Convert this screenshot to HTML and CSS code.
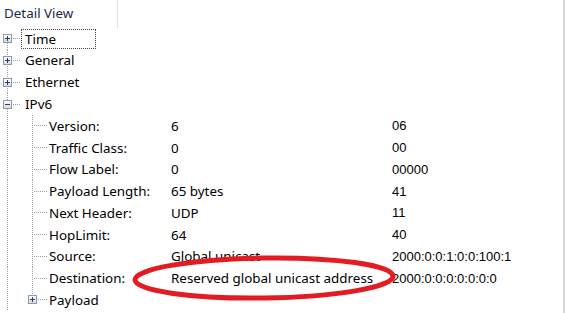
FILE: index.html
```html
<!DOCTYPE html>
<html lang="en">

<head>
    <meta charset="UTF-8">
    <title>Detail View</title>
    <link rel="stylesheet" href="styles.css">
</head>

<body>

    <div class="pane">
        <div class="head">
            <div class="title">Detail View</div>
            <div class="split"></div>
        </div>

        <div class="tree">
            <div class="row">
                <span class="g top first"><i class="box plus"></i></span>
                <span class="name focus">Time</span>
            </div>
            <div class="row">
                <span class="g top"><i class="box plus"></i></span>
                <span class="name">General</span>
            </div>
            <div class="row">
                <span class="g top"><i class="box plus"></i></span>
                <span class="name">Ethernet</span>
            </div>
            <div class="row">
                <span class="g top"><i class="box minus"></i></span>
                <span class="name">IPv6</span>
            </div>

            <div class="row">
                <span class="g line"></span><span class="g leaf"></span>
                <span class="key">Version:</span><span class="val">6</span><span class="hex">06</span>
            </div>
            <div class="row">
                <span class="g line"></span><span class="g leaf"></span>
                <span class="key">Traffic Class:</span><span class="val">0</span><span class="hex">00</span>
            </div>
            <div class="row">
                <span class="g line"></span><span class="g leaf"></span>
                <span class="key">Flow Label:</span><span class="val">0</span><span class="hex">00000</span>
            </div>
            <div class="row">
                <span class="g line"></span><span class="g leaf"></span>
                <span class="key">Payload Length:</span><span class="val">65 bytes</span><span class="hex">41</span>
            </div>
            <div class="row">
                <span class="g line"></span><span class="g leaf"></span>
                <span class="key">Next Header:</span><span class="val">UDP</span><span class="hex">11</span>
            </div>
            <div class="row">
                <span class="g line"></span><span class="g leaf"></span>
                <span class="key">HopLimit:</span><span class="val">64</span><span class="hex">40</span>
            </div>
            <div class="row">
                <span class="g line"></span><span class="g leaf"></span>
                <span class="key">Source:</span><span class="val">Global unicast</span><span class="hex">2000:0:0:1:0:0:100:1</span>
            </div>
            <div class="row">
                <span class="g line"></span><span class="g leaf"></span>
                <span class="key">Destination:</span><span class="val">Reserved global unicast address</span><span class="hex">2000:0:0:0:0:0:0:0</span>
            </div>
            <div class="row">
                <span class="g line"></span><span class="g last"><i class="box plus"></i></span>
                <span class="key">Payload</span>
            </div>
        </div>
    </div>

    <!-- red marker drawn over the destination row -->
    <svg class="mark" width="567" height="313" viewBox="0 0 567 313">
        <ellipse cx="264" cy="278" rx="129" ry="20" transform="rotate(-0.8 264 278)"
            fill="none" stroke="#e31b23" stroke-width="5" />
    </svg>

</body>

</html>
```

FILE: styles.css
```css
* {
    box-sizing: border-box;
}

html,
body {
    margin: 0;
    width: 567px;
    height: 313px;
    overflow: hidden;
    background: white;
}

body {
    position: relative;
    font-family: 'Noto Sans', 'Open Sans', Arial, sans-serif;
    font-size: 13.4px;
    color: #000;
}

.pane {
    width: 565px;
    height: 313px;
    border-right: 2px solid #d6d6d6;
}

.head {
    display: flex;
    height: 28px;
}

.title {
    width: 117px;
    padding: 4px 0 0 4px;
    color: #1b2a48;
}

.split {
    border-left: 1px solid #e2e2e2;
}

.row {
    display: flex;
    align-items: center;
    height: 21.75px;
    white-space: nowrap;
}

/* tree gutters: dotted connector lines drawn as backgrounds */
.g {
    display: flex;
    align-items: center;
    height: 100%;
    flex: none;
}

.top {
    width: 21px;
    background:
        repeating-linear-gradient(#a0a0a0 0 1px, transparent 1px 2px) 7px 0 / 1px 100% no-repeat,
        repeating-linear-gradient(to right, #a0a0a0 0 1px, transparent 1px 2px) 13px 50% / 7px 1px no-repeat;
}

.top.first {
    background:
        repeating-linear-gradient(#a0a0a0 0 1px, transparent 1px 2px) 7px 100% / 1px 50% no-repeat,
        repeating-linear-gradient(to right, #a0a0a0 0 1px, transparent 1px 2px) 13px 50% / 7px 1px no-repeat;
}

.line {
    width: 25px;
    background: repeating-linear-gradient(#a0a0a0 0 1px, transparent 1px 2px) 7px 0 / 1px 100% no-repeat;
}

.leaf {
    width: 24px;
    background:
        repeating-linear-gradient(#a0a0a0 0 1px, transparent 1px 2px) 7px 0 / 1px 100% no-repeat,
        repeating-linear-gradient(to right, #a0a0a0 0 1px, transparent 1px 2px) 9px 50% / 13px 1px no-repeat;
}

.last {
    width: 24px;
    background:
        repeating-linear-gradient(#a0a0a0 0 1px, transparent 1px 2px) 7px 0 / 1px 50% no-repeat,
        repeating-linear-gradient(to right, #a0a0a0 0 1px, transparent 1px 2px) 13px 50% / 9px 1px no-repeat;
}

/* expand / collapse boxes */
.box {
    position: relative;
    display: block;
    width: 9px;
    height: 9px;
    margin-left: 3px;
    border: 1px solid #8e9aa8;
    background: linear-gradient(#ffffff, #d8dde3);
}

.box::before,
.box::after {
    content: '';
    position: absolute;
    background: #2b3f5c;
}

.box::before {
    left: 1px;
    top: 3px;
    width: 5px;
    height: 1px;
}

.plus::after {
    left: 3px;
    top: 1px;
    width: 1px;
    height: 5px;
}

.name {
    padding-left: 4px;
    line-height: 19px;
}

.focus {
    width: 75px;
    height: 20px;
    border: 1px dotted #444;
    padding-left: 3px;
}

.key {
    width: 122px;
}

.val {
    width: 221px;
}

.hex {
    font-family: 'Liberation Sans', Arial, sans-serif;
    font-size: 13px;
}

.mark {
    position: absolute;
    left: 0;
    top: 0;
    pointer-events: none;
}
```
